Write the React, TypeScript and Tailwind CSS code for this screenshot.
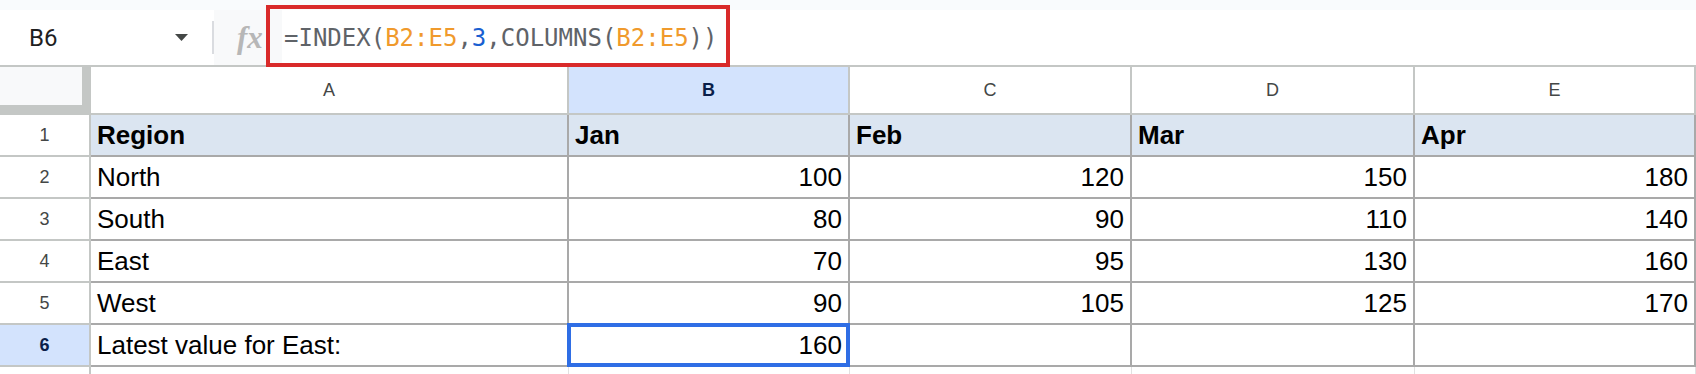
import React from 'react'

const columns = ['A', 'B', 'C', 'D', 'E']

const rows: (string | number)[][] = [
  ['Region', 'Jan', 'Feb', 'Mar', 'Apr'],
  ['North', 100, 120, 150, 180],
  ['South', 80, 90, 110, 140],
  ['East', 70, 95, 130, 160],
  ['West', 90, 105, 125, 170],
  ['Latest value for East:', 160, '', '', ''],
]

const gridCols = 'grid grid-cols-[91px_478px_281px_282px_283px_281px]'

function FormulaBar() {
  return (
    <div className="flex h-[57px] border-b-2 border-[#c4c7c5] bg-white">
      {/* Name box */}
      <div className="flex w-[212px] items-center justify-between pl-[29px] pr-[24px]">
        <span className="font-['Roboto',sans-serif] text-[24px] text-[#1f1f1f]">B6</span>
        <svg width="13" height="7" viewBox="0 0 13 7">
          <path d="M0 0h13L6.5 7z" fill="#444746" />
        </svg>
      </div>
      <div className="flex items-center">
        <div className="h-[33px] w-[2px] bg-[#dadce0]" />
      </div>
      {/* fx */}
      <div className="flex w-[68px] items-center bg-[#f8f9fa] pl-[23px]">
        <span className="font-['Liberation_Serif',serif] text-[31px] font-bold italic leading-none text-[#b7b7b7]">
          fx
        </span>
      </div>
      {/* Formula input */}
      <div className="flex flex-1 items-center pl-[2px] font-['DejaVu_Sans_Mono',monospace] text-[24px] text-[#5f6368]">
        <span>=INDEX(</span>
        <span className="text-[#f09a2c]">B2:E5</span>
        <span>,</span>
        <span className="text-[#1a5fd1]">3</span>
        <span>,COLUMNS(</span>
        <span className="text-[#f09a2c]">B2:E5</span>
        <span>))</span>
      </div>
    </div>
  )
}

function ColumnHeaders() {
  return (
    <div className={`${gridCols} h-[48px]`}>
      <div className="border-r-[9px] border-b-[10px] border-[#c4c7c5] bg-[#f8f9fa]" />
      {columns.map((col) => (
        <div
          key={col}
          className={
            col === 'B'
              ? 'flex items-center justify-center border-r-2 border-b-2 border-[#c4c7c5] bg-[#d3e3fd] text-[18px] font-bold text-[#0b1f4a]'
              : 'flex items-center justify-center border-r-2 border-b-2 border-[#c4c7c5] bg-white text-[18px] text-[#444746]'
          }
        >
          {col}
        </div>
      ))}
    </div>
  )
}

export default function App() {
  return (
    <div className="relative h-[374px] w-[1696px] overflow-hidden bg-white font-['Liberation_Sans',Arial,sans-serif]">
      <div className="h-[10px] bg-[#f9fbfd]" />
      <FormulaBar />
      <ColumnHeaders />

      {rows.map((row, r) => {
        const selectedRow = r === 5
        return (
          <div key={r} className={`${gridCols} h-[42px]`}>
            <div
              className={
                selectedRow
                  ? 'flex items-center justify-center border-r-2 border-b-2 border-[#c4c7c5] bg-[#d3e3fd] text-[18px] font-bold text-[#0b1f4a]'
                  : 'flex items-center justify-center border-r-2 border-b-2 border-[#c4c7c5] bg-white text-[18px] text-[#444746]'
              }
            >
              {r + 1}
            </div>
            {row.map((cell, c) => (
              <div
                key={c}
                className={[
                  'relative flex items-center border-r-2 border-b-2 border-[#a9a9a9] px-[6px] text-[26px] leading-none text-black',
                  typeof cell === 'number' ? 'justify-end' : 'justify-start',
                  r === 0 ? 'bg-[#dbe5f1] font-bold' : 'bg-white',
                ].join(' ')}
              >
                {cell}
                {selectedRow && c === 1 && (
                  <div className="absolute -top-[2px] -left-[2px] -right-[2px] -bottom-[2px] border-[4px] border-[#2f6ee5]" />
                )}
              </div>
            ))}
          </div>
        )
      })}

      {/* partial row 7 */}
      <div className={`${gridCols} h-[20px]`}>
        <div className="border-r-2 border-[#c4c7c5] bg-white" />
        {columns.map((col) => (
          <div key={col} className="border-r border-[#e1e1e1] bg-white" />
        ))}
      </div>

      {/* annotation box around the formula */}
      <div className="absolute top-[5px] left-[266px] h-[62px] w-[464px] border-[4px] border-[#d92a2a]" />
    </div>
  )
}
